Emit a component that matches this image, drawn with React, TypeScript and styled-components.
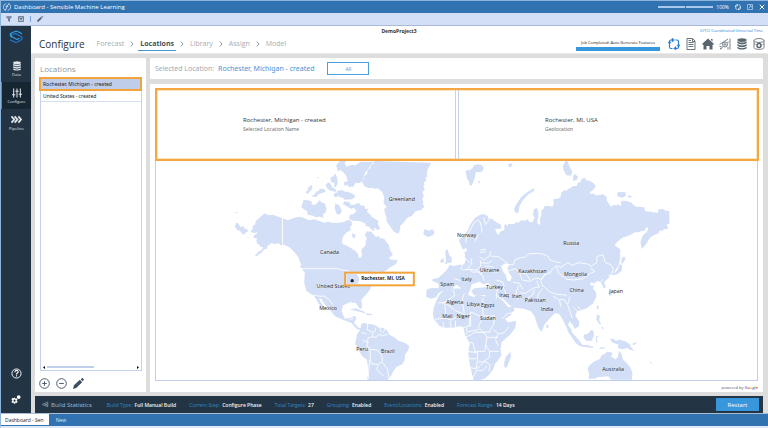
import React from 'react';
import styled, { createGlobalStyle } from 'styled-components';

const GlobalStyle = createGlobalStyle`
  *, *::before, *::after { box-sizing: border-box; }
  html, body, #root { height: 100%; margin: 0; }
  body { font-family: "Open Sans", "Noto Sans", sans-serif; font-size: 5px; color: #333; background: #fff; overflow: hidden; }
  button { font: inherit; color: inherit; border: 0; padding: 0; background: none; cursor: pointer; }
  a { color: inherit; text-decoration: none; }
  h1, h2, p, dl, dd, dt, ul { margin: 0; padding: 0; font-weight: 400; }
  svg { display: block; flex: none; }
`;

const Window = styled.div`
  display: flex; flex-direction: column; height: 100vh;
  border: 1px solid #8db4da; border-right-width: 0; border-bottom: 2px solid #dfe8f5;
  white-space: nowrap;
`;
const TitleBar = styled.header`
  display: flex; align-items: center; gap: 3px; height: 12px; flex: none;
  padding: 0 3px 0 2px; background: #3172b0; color: #fff; font-size: 6px;
`;
const WindowTools = styled.div`
  display: flex; align-items: center; gap: 6px; margin-left: auto; font-size: 5px;
`;
const ZoomTrack = styled.div`
  display: flex; gap: 1px; margin-right: -3px;
  span { width: 27px; height: 2px; background: #a9c8ee; }
`;
const IconButton = styled.button<{ $tone?: string }>`
  display: flex; align-items: center; justify-content: center; color: ${p => p.$tone ?? 'inherit'};
`;
const Toolbar = styled.div`
  display: flex; align-items: center; gap: 6px; height: 13px; flex: none; padding: 0 5px;
  background: #d3dff7; border-bottom: 1px solid #a9b9d8; color: #56657a;
`;
const Divider = styled.span`width: 1px; height: 6px; background: #7ba0dc;`;
const Body = styled.div`display: flex; flex: 1; min-height: 0;`;
const Sidebar = styled.nav`
  display: flex; flex-direction: column; width: 30px; flex: none; background: #233444; color: #fff;
`;
const Logo = styled.div`display: flex; justify-content: center; height: 29px; padding-top: 4px;`;
const NavItem = styled.a<{ $active?: boolean }>`
  display: flex; flex-direction: column; align-items: center; justify-content: center; gap: 1px;
  height: 27px; font-size: 4px; line-height: 5px; color: #dfe5ea;
  background: ${p => (p.$active ? '#172633' : 'transparent')};
  border-left: 1px solid ${p => (p.$active ? '#3d94cf' : 'transparent')};
`;
const SideFooter = styled.div`
  display: flex; flex-direction: column; align-items: center; gap: 16px; margin-top: auto; padding-bottom: 8px;
`;
const Main = styled.main`display: flex; flex-direction: column; flex: 1; min-width: 0; background: #ddd;`;
const PageHeader = styled.div`
  display: grid; grid-template-columns: 1fr auto 1fr; grid-template-rows: 9px 18px; flex: none;
  padding: 0 3px 0 8px; background: #fff; border-bottom: 1px solid #e9e9e9;
`;
const Project = styled.div`grid-column: 2; font-weight: 700; line-height: 10px; font-size: 5px; padding-right: 6px;`;
const Zone = styled.div`grid-column: 3; text-align: right; color: #2585d0; font-size: 4px; line-height: 9px; padding-right: 2px;`;
const HeaderRow = styled.div`grid-column: 1 / -1; display: flex; align-items: center;`;
const PageTitle = styled.h1`font-size: 10px; line-height: 16px; color: #26313a; margin-right: 10px;`;
const Crumbs = styled.nav`display: flex; align-items: center; gap: 3px; font-size: 7px; color: #a3aeb5;`;
const Chevron = styled.span`color: #6d7a83;`;
const Crumb = styled.a<{ $current?: boolean }>`
  line-height: 13px; padding: 0 2px;
  color: ${p => (p.$current ? '#3f5363' : 'inherit')};
  font-weight: ${p => (p.$current ? 700 : 400)};
  border-bottom: 1px solid ${p => (p.$current ? '#4898d0' : 'transparent')};
`;
const HeaderTools = styled.div`display: flex; align-items: center; gap: 5px; margin-left: auto; color: #58656e;`;
const Job = styled.div`
  width: 84px; margin-right: 3px; padding-top: 1px; border-bottom: 4px solid #3796dc; text-align: center;
  font-size: 4px; line-height: 8px; color: #111;
`;
const Content = styled.div`display: flex; gap: 4px; flex: 1; min-height: 0; padding: 4px 5px 4px 4px;`;
const Panel = styled.section`background: #fff; border-radius: 1px;`;
const ListPanel = styled(Panel)`display: flex; flex-direction: column; width: 111px; flex: none; padding: 4px 4px 0;`;
const PanelTitle = styled.h2`font-size: 8px; line-height: 13px; color: #8d989f; padding-left: 1px; margin-bottom: 3px;`;
const ListBox = styled.div`
  display: flex; flex-direction: column; flex: 1; margin-left: 1px; border: 1px solid #c3d0ee; min-height: 0;
`;
const Option = styled.button<{ $selected?: boolean }>`
  text-align: left; font-family: "Noto Sans", sans-serif; font-size: 5px; line-height: 10px; color: #222;
  padding: 0 2px; margin: ${p => (p.$selected ? '-2px -1px 0 -2px' : '0')};
  background: ${p => (p.$selected ? '#bfcdeb' : '#fff')};
  border: ${p => (p.$selected ? '2px solid #f2a33a' : '0')};
  border-bottom: ${p => (p.$selected ? '2px solid #f2a33a' : '1px solid #d5dff5')};
`;
const ScrollRow = styled.div`
  display: flex; align-items: center; justify-content: space-between; margin-top: auto; height: 6px; padding: 0 2px;
`;
const Thumb = styled.span`width: 47px; height: 2px; margin-right: auto; margin-left: 2px; background: #bfd0ea;`;
const ListActions = styled.div`display: flex; align-items: center; gap: 6px; height: 18px; margin-top: 3px; color: #3f4f63;`;
const Right = styled.div`display: flex; flex-direction: column; gap: 5px; flex: 1; min-width: 0;`;
const Selected = styled(Panel)`
  display: flex; align-items: center; gap: 4px; height: 21px; flex: none; padding: 0 5px; font-size: 7px; color: #9aa5ac;
  strong { font-family: "Noto Sans", sans-serif; font-weight: 400; color: #4596d6; }
`;
const AllButton = styled.button`
  width: 42px; height: 13px; margin-left: 9px; border: 1px solid #4aa0dc; color: #4596d6; font-size: 5px;
`;
const MapPanel = styled(Panel)`display: flex; flex-direction: column; flex: 1; min-height: 0; padding: 4px 4px 0 5px;`;
const Cards = styled.div`
  display: grid; grid-template-columns: 1fr 1fr; gap: 2px; height: 73px; flex: none;
  border: 2px solid #f4a742; box-shadow: inset 0 0 0 1px #fde3bd;
`;
const Card = styled.div`
  display: flex; flex-direction: column; justify-content: center; padding: 1px 0 0 86px;
  &:first-child { border-right: 1px solid #c5d0ec; }
  &:last-child { border-left: 1px solid #c5d0ec; }
`;
const CardValue = styled.p`font-size: 6px; line-height: 9px; color: #333;`;
const CardLabel = styled.p`font-size: 5px; line-height: 9px; color: #666;`;
const MapFrame = styled.div`flex: 1; min-height: 0; margin-right: 1px; border: 1px solid #c2cfea; border-top: 0;
  svg { width: 100%; height: 100%; }
`;
const Powered = styled.div`
  text-align: right; font-size: 4px; line-height: 8px; padding: 3px 1px 0 0; color: #555; flex: none;
`;
const Letter = styled.span<{ $c: string }>`color: ${p => p.$c}; font-weight: 600;`;
const Stats = styled.footer`
  display: flex; align-items: center; gap: 15px; height: 17px; flex: none; margin: 0 5px 0 4px; padding: 0 4px 0 7px;
  background: #233444; font-size: 5px;
`;
const StatsTitle = styled.div`display: flex; align-items: center; gap: 2px; font-size: 6px; color: #9ab4ca;
  font-family: "Noto Sans", sans-serif;
`;
const StatList = styled.dl`display: flex; gap: 13px;
  div { display: flex; gap: 2px; }
  dt { color: #3288c6; }
  dd { color: #f0f3f5; font-weight: 600; }
`;
const Restart = styled.button`
  width: 43px; height: 13px; margin-left: auto; background: #3796dc; color: #fff; font-size: 6px;
`;
const TabBar = styled.nav`
  display: flex; gap: 3px; height: 13px; flex: none; background: #3172b0; border-top: 1px solid #a9bdd4; font-size: 5px;
`;
const Tab = styled.a<{ $active?: boolean }>`
  padding: 1px 5px 0 4px; line-height: 10px; height: 11px;
  background: ${p => (p.$active ? '#fff' : 'transparent')};
  color: ${p => (p.$active ? '#222' : '#dbe9f7')};
`;

const Ic = ({ s = 12, children, w = 2 }: { s?: number; w?: number; children: React.ReactNode }) => (
  <svg width={s} height={s} viewBox="0 0 24 24" fill="none" stroke="currentColor" strokeWidth={w} aria-hidden="true">{children}</svg>
);
const Pencil = ({ s }: { s: number }) => (
  <Ic s={s} w={0}><path fill="currentColor" d="M0 24l2-8L15 4l5 5L7 22zM17 3l2-2c1-1 2-1 3 0l1 1c1 1 1 2 0 3l-2 2z" /></Ic>
);
const Gear = ({ s }: { s: number }) => (
  <Ic s={s} w={0}>
    <path fillRule="evenodd" fill="currentColor" d="M7 7l2-1 1 2 2 1 2-1 2 3-2 1v2l2 2-2 3-3-1-1 3H7l-1-3-3 1-2-3 2-2v-2l-2-2 2-3 3 1zM8.500 11a2.500 2.500 0 100 5 2.500 2.500 0 000-5z" />
    <circle cx="18.500" cy="5" r="4.500" fill="currentColor" />
  </Ic>
);
const Discs = ({ s }: { s: number }) => (
  <svg width={s} height={s} viewBox="0 0 24 26" fill="currentColor" aria-hidden="true">
    <ellipse cx="12" cy="4.500" rx="10" ry="4" />
    <path d="M2 7c4 4 16 4 20 0v4c-3 4-17 4-20 0zM2 13c4 4 16 4 20 0v4c-3 4-17 4-20 0zM2 19c4 4 16 4 20 0v3c-3 4-17 4-20 0z" />
  </svg>
);
const Sync = ({ s }: { s: number }) => (
  <Ic s={s} w={2.400}>
    <path d="M9 4H6C4 4 3 5 3 7v10M15 4h3c2 0 3 1 3 3v10M3 15v3c0 2 1 3 3 3h3M21 16v2c0 2-1 3-3 3h-4" />
    <path fill="currentColor" strokeWidth="1" d="M8 0l5 4-5 4zM16 17l-5 4 5 3zM0 10h6l-3-4zM18 14h6l-3 4z" />
  </Ic>
);

const LAND = [
  // North and Central America
  'M795 642l12 6 13-2 25 9 20 8 20-8 15-3 16 5 12 6 15-3 17 5 14 5 12-3 15 4 13-1 16-1 15-7 10 2 3 12-6 6 2 10-14 8-10 13-3 14 5 9 8 2 15 9 12 7 8 9 3 13 7-2 3-8-3-10 3-8 11-11-1-9 4-12-6-8 6-12 14 1 13 16 8-3 5 6 12 2 14 20 4 15 8 14-13 10 10 4 18 1-6 12-20 12-12 10-20 12-16 18-10 26-10 12-16 18 3 16-2 11-7-3-10-15-18-2-20 9-5 18 10 22 17-2 13-7 5 7-8 15 13 13 15 7-2 5-18-8-15-17-25-10-25-10-15-20-10-10-12-15-3-8-8 0 22 36-8-3-14-17-14-24-23-15-7-25 2-30-15-20 5-3-12-25-18-22-20-13-12 1-8-7-9 4-11-4-12 9-2 8-8 2-6 9-12 7-2 4-8-1 12-13 8-3 5-9-8-2-6-8-2 2-5-12 4-5-13-5 3-6 10-7-4-2-5 3-12-5 7-10-1-6 8-6 2-10z',
  'M710 670l6 2 7 11 9-3 3 8 9 2 1 8-6 1-4 6-7-1-6-9-9-4-7-8zM708 638h6v3h-6zM742 712l6 2-3 2z',
  // Canadian arctic islands
  'M912 602l14 1 12 4-3 7 9 3 6-3 10-11 6 6 11 4 4 16-3 11-8 5 2 10-11-3-14 2-5-5-17-2-2-11-10-6-8-8 4-9zM918 580l6-7 2-9 12-8 0 13-9 9-4 6zM935 590l9-4 7-10 7-1 2-7 16 2 2 8-20 6-8 9-10-1zM978 556l9-7 6 4 3 8 14 11-2 7-6-3-10-2-8-6zM993 535l9-5 4-8 6 10 3 17-5 15-7-4 2-9-11-3zM952 536l5-4 1 5zM1002 585l9-6 6 6-2 7-9 2zM1012 575l16-3 9 5 9 0 19 9 2 8-10 6-22 1-5-6-11-2zM1010 498l12-14h20l-7 8 6 9-3 11-8 6-6-6-9 4zM1024 500l14 4 17-8 13 2 15-11h42l-12 10-5 10-12 14-2 14-9 14-8 3-8-2-8 12-14 1-2-6-10 2-2-10 12-4-6-18-6-6zM1030 614l5-8 14 2 6 10 13-3 10-5 5 8 11 1 4 10 8-1-4 10 10 6 4 8 12 8 9 4-2 11 7 12-8 6-10-9 1 12-8-5-11-10-6 0-4-9-14-6-15-2-9 0-10-7 4-11 10-2 9-8-7-10-10 2zM1007 612l12 6 8 17-6 11-10-3-5-15z',
  'M1132 796l14-4 8 10 3 14-18 0zM1058 702l10 4-3 12-7-6z',
  // Caribbean
  'M1050 930l20-3 28 12-2 3-22-6zM1100 942l16 2 3 4-18-1zM795 938l2 2h-3z',
  // Greenland
  'M1125 485l-3 8-8 5-2 8-8 7-1 10-9 9-4 6-3 8 7 14 12 6 12 0 8 2 9-1 13 11 6 16-2 20 5 2 4 8-7 6 2 10 5 14 0 12 10 14 11 16 8 5 8 2 4-15 0-8 9-9 14-17 12-4 11-14 16-4 11-10-5-8 2-8-5-6 6-9-4-13 7-8-5-9 4-4-2-7 8-7-4-8 8-4-4-6 4-16 5-9 5-10z',
  'M1273 692l5-2 9 4 12-4 6 8-4 10-17 5-12-8zM1398 514l9-3 3 3 12-12 5 4 3 9-3 14-4 16-7 15-6-4-2-11-6-8zM1422 498l14-3 12 3 5 8-4 9-9 4-14-3zM1436 544l6 2-4 9zM1525 494l12-2 2 8-10 4-2-4zM1546 639l-2-12 8-14 13-20 19-15 19-11 2 7-16 9-17 17-12 20-4 22z',
  // British Isles
  'M1337 755l7-5 5 16 8 10 0 13-21 5 4-11-2-16zM1322 784l10-9 1 12-8 5z',
  // Scandinavia
  'M1378 722l12-11 12-13 9-20 14-21 14-9 13-4 14 7-3 13 5 24 4 26-7 20-20 5-8-12 3-13 8-10-12 1-9 16-3 16 1 13-6 9-8 10-7-10-3-12-12 3z',
  // Eurasia
  'M1462 657l14 1 14 10 14 8 1 12-18 0 4 12 6 7 5-10 13-6-1-12 5-6 4 8 4-7 16 1 8-7 6 2 9-7 9 1 8-4 8 9 8 0 6-14-5-10 3-14 8-6 5 10 1 17-4 18 6 7 3-3-1-15 4-10 1-16 6-4 3-8 8-2 16 3 4-10-2-12 13-2 9-4 2-13 10-9 6 2 6-6 6-1 6-6 13-1 3-10 9-2 2-9 10-4 4 8 3 0 9 3 9 4 8 10-8 12-12 8 6 4 6-2 7 6 9 0 14-3 10 7 1 12 5 6 4 8 5 5 4-6 11 1 5-3 7 5 2-3 0-13 17 1 14 5 7 8 9 5 7-1 15 2 2 9 2 3 18 1 6 3 5-1 9 2 0-10 2-1 12-1 9 5 10 1 1 38-8 2 4 13-10 1-8 5-8 0-4 9-6 1-16 9-7 9-5 10-9 11-6 6-4-22 6-18 12-10 6-12-6-3-6 10-8 1-10 4-10 0-15 8-25 9-14 12-8 10 17 12 0 24-3 20-14 24-10 6-8 12-13 12 5 16-6 4-7-16-11-8-12 9-8-5-4 8 14 4-5 6 10 14 0 14-9 18-18 14-18 7-12 3-6 13 13 18-2 14-12 8-8-15-9-8-3 11 9 13 6 20-9-4-7-14-10-20-8-16-8-12-12-3-15 15-16 18-10 24-9-12-8-22-3-12-12-16-18-7-18-2-14-2-15-9-18-18-5 0 7 10 13 15 14-2 5 11-13 17-28 17-19 6-10-18-13-28-6-18 4-13-3-8-20 2-14-2-8-12 10-8 30-3 24 1-13-14-15 4-10-8-24 8-5 17-7 14-11-6-12-16-11-8-12 9 15 11 14 14-5 3-5 10-5-1 0-10-14-14-14-8-14 4-14 8-7 12-15 4-15-5 1-22 15-5 22 1-1-14-19-9 1-5 17-3 14-13 12-12 9-15 10 4 14-3 19-2 6-15-4-8 2-14 15-5 7-12z',
  'M1395 758l8-4 2 12-8 5z',
  // Africa
  'M1322 883l13-10 25-5 28-1 5 14 20 8 11 5 8-10 16 6 24 4 15 5 8 16 7 16 10 22 13 16 25-4-3 22-17 21-24 21-3 22 3 16-10 16-10 11-5 16-13 17-14 12-15 3-12 3-6-6-8-35-5-24-2-22 5-25-10-18-6-12-1-14-12-9-22 5-26 0-18-7-12-15-4-18 3-22 10-25z',
  'M1530 1060l3-3 1 15-7 20-5 12-7 1-1-15 5-18z',
  // South America
  'M1085 975l7-5 9 3 12 1 14 4 13 8 10-1 12 7 8 14 14 8 13 10 22 8 10 8-3 13-9 12-2 18-7 12-17 8-9 12-7 14-12 14-60 0 3-22-1-22-3-18-15-12-9-16-11-20 3-14 3-16 9-10z',
  // Asia-Pacific islands
  'M1866 780l4-8 8 2-2 9-9 12-2-8zM1860 795l8 2-2 18-12 10-18 3-2-5 14-4 6-8zM1828 875l7 0 2 9-6 8-4-10zM1642 973l6 8-3 7-5-4zM1794 918l4 1-2 13-5-6zM1792 945l9 4-2 16 7 9-6 1-9-14zM1805 980l8 6-4 4zM1702 992l11 3 14 14 13 16 9 11-5 6-15-10-12-18zM1740 1036l22 1 20 5-2 4-38-5zM1753 1006l12-3 11-12 7 6 0 12-7 16-16-1-8-10zM1788 1012l13-3-10 7 4 14-4 0zM1800 1045l20-2-9 5-11 1zM1832 1018l10 0 6 6 14-3 18 6 13 9 0 6 12 12-12-2-10-6-16 4-12-4 2-10-20-7zM1900 1032l14-4-8 8-6 1zM1948 1086l10 5-3 2zM1997 1075h4v2h-4z',
  // Australia
  'M1768 1100l14-12 19-9 6-12 10-4 6-6 10 1 6 4-4 10 14 8 6-8 4-18 7 10 4 16 12 12 10 12 7 16-2 21-62 0-9-10-16 1-17 2-6 4h-20l2-14-5-16z',
  // Arctic Russia
  'M1690 500l8-15 6 0 6 16 8 16-3 12-14-1-8-14zM1722 528l4-4 10 8-4 9-12 4zM1853 580l10-3 15 2 1 10-10 6-16-4zM1884 588l10 1 4 4-10 2zM1864 611l8 0 2 4-9 1zM2004 640l3 1-2 2zM1868 690l5 0 2 9-4 5z',
].join('');

const BORDERS = [
  'M849 655v84l20 5 18 18 12 18M900 808h115l12 4 18 2 20 14 14 16 20-6 16-8 8-12h18M940 887l22 4 12-1 16 12 10 14M1030 946l8-8h10M1050 962l12-5',
  'M1105 972l-2 20 18 6-3 14-12 4-2 14-14-8M1087 1000l14 4M1129 985l-4 14M1142 985l2 14M1158 984l-8 18M1118 1012l12 2 8-10 10 6 18-6M1106 1028l-4 12 10 8M1112 1050l22 2 12 14 3 18-12 12-22-3-3-18zM1110 1082l-4 58M1148 1088l16 22 4 26M1136 1098l-4 12 20 20',
  'M1398 730l4-18 10-20 12-22 12-8 6 8M1442 668l5 20-1 12M1452 654l6 22 12-16',
  'M1442 752l18-2M1440 760l20-3M1440 772l14 10 16-12 4-14M1415 776l2 18-14 14M1402 780l10 12M1380 785l10 8-6 18M1388 812l22-2 20 2 14-12-2-18M1410 808l8 10 24 0M1430 810l14 14 8-10M1442 790l24 2 12-8M1455 800l24 2 6 16 12 0M1440 822l10 8 4 14M1364 838l20 6',
  'M1474 770l22 2 18 12 14 12 14 0 4-14 14-6 16-2 10-10 24-2 20 2 14 6 8 12 18 6 14 2M1526 814l22-6 12 12 20 4 12 18M1560 820l8 22 22 4 20-10 16 4 12-14 14-12M1670 800l-14 12-2 8-20 6-10 20 6 14 22 18 16 6 20 2 14 2M1670 800l14 4 20-14 14 8 18-8 28 4 12 8M1670 804l8 18 24 18 20 2 28-4 20-14 16-8-12-8M1776 800l16-10 0-18 18-6 8 24 16 6 8 14-8 18-8 0M1810 840l-10 14',
  'M1490 842l20 6 4 12M1510 862l10 22 12 4M1494 868l-4 20 20 14 14 10M1540 848l20 4 10 18M1558 858l-8 22 4 20M1560 880l18 2 24-16 20-4M1578 900l20-12 8-18M1600 908l14-6 2-18 14-16M1618 862l-6-18M1660 890l20 12 14-2 8 14M1680 902l4 20M1712 892l-8 24 8 22 6 18M1722 924l14 14 8 14M1734 920l10 12M1508 958l14-14 24-6 10-8M1494 888l-4 10',
  'M1360 870l6 18-38 26M1316 910l20 0 32 24 36 16M1336 914l4 42-34 4M1394 883l-6 18 6 40M1414 938l34 16M1450 896l0 54 36 0M1412 952l-4 28M1336 956l20 6 20-12M1412 938l2 42-34 6M1450 956l-14 26 14 16 24 0M1486 950l-4 26-14 22M1480 990l18 14 16-4 14-18M1368 964l0 30M1352 966l4 28M1330 968l6 26M1304 962l14 14-14 8M1380 986l-4 8M1400 984l4 14-14 14M1404 998l34-8M1390 1016l22-8 14-10 28 2 8 12M1396 1030l24 0 6 24M1462 1012l-4 28-2 16-32 0M1400 1056l34 4 0 18-32 0M1462 1014l34 0M1496 1004l-8 16 8 20M1458 1036l12 20 28 0M1470 1056l0 18-20 14-14 0M1402 1104l28 4 4-28M1430 1108l12-8 14-14 16 10-4 20M1418 1138l14-26 18 2 12-14',
].join('');

const LABELS: [string, number, number][] = [
  ['Greenland', 1207, 602], ['Canada', 990, 762], ['United States', 1001, 863], ['Mexico', 986, 930], ['Peru', 1088, 1052],
  ['Brazil', 1165, 1058], ['Norway', 1401, 711], ['Russia', 1715, 734], ['Ukraine', 1470, 815], ['Italy', 1401, 844],
  ['Spain', 1343, 859], ['Turkey', 1485, 866], ['Kazakhstan', 1599, 820], ['Mongolia', 1728, 827], ['China', 1731, 876],
  ['Japan', 1850, 879], ['Iraq', 1514, 892], ['Iran', 1552, 895], ['Pakistan', 1607, 905], ['India', 1643, 933],
  ['Algeria', 1366, 912], ['Libya', 1421, 917], ['Egypt', 1465, 920], ['Mali', 1344, 955], ['Niger', 1391, 955],
  ['Sudan', 1465, 960], ['Australia', 1841, 1114],
];

const WorldMap = () => (
  <svg viewBox="468 485 1806 657" preserveAspectRatio="xMidYMid slice" role="img" aria-label="Map of locations">
    <path d={LAND} fill="#d3dff7" strokeLinejoin="round" />
    <path d="M1505 800l12-8 14 4-8 10 6 16 8 10-4 14-10-2-4-18-8-8z" fill="#fff" />
    <path d={BORDERS} fill="none" stroke="#fff" strokeOpacity=".85" strokeWidth="3" strokeLinejoin="round" />
    <g fontSize="16" fill="#222" stroke="#fff" strokeOpacity=".45" strokeWidth="2" paintOrder="stroke" textAnchor="middle">
      {LABELS.map(([name, x, y]) => <text key={name} x={x} y={y + 2}>{name}</text>)}
    </g>
    <rect x="1037" y="820" width="206" height="38" fill="#fff" stroke="#f2a33a" strokeWidth="6" />
    <path d="M1041 824h30l8 12-2 12-4 6h-32z" fill="#d3dff7" />
    <circle cx="1058" cy="844" r="5" fill="#222" />
    <text x="1085" y="843" fontSize="14" fontWeight="700" fill="#222">Rochester, MI, USA</text>
  </svg>
);

const stats = [
  ['Build Type:', 'Full Manual Build'], ['Current Step:', 'Configure Phase'], ['Total Targets:', '27'],
  ['Grouping:', 'Enabled'], ['Event/Locations:', 'Enabled'], ['Forecast Range:', '14 Days'],
];
const crumbs = ['Forecast', 'Locations', 'Library', 'Assign', 'Model'];

export default function App() {
  return (
    <Window>
      <GlobalStyle />
      <TitleBar>
        <Ic s={8}><path d="M10 2C4 3 1 8 1 13c0 4 3 8 8 9M14 22c5-1 9-5 9-11 0-4-3-8-7-9M6 22C12 20 10 4 19 2M8 10h8" /></Ic>
        <span>Dashboard - Sensible Machine Learning</span>
        <WindowTools>
          <ZoomTrack><span /><span /></ZoomTrack>
          <span>100%</span>
          <IconButton aria-label="Refresh"><Sync s={6} /></IconButton>
          <IconButton aria-label="Restore"><Ic s={6}><path d="M2 2h20v20H2zM7 17l9-9M10 7h7v7" /></Ic></IconButton>
          <IconButton aria-label="Close"><Ic s={6} w={4}><path d="M3 3l18 18M21 3L3 21" /></Ic></IconButton>
        </WindowTools>
      </TitleBar>
      <Toolbar>
        <IconButton aria-label="Filter"><Ic s={6} w={3}><path d="M2 3h20l-8 9v10l-4-3v-7z" fill="#8a98ad" /></Ic></IconButton>
        <IconButton aria-label="Clear filter"><Ic s={6} w={3}><path d="M2 2h20v20H2zM2 9h20M7 5l10 14M17 5L7 19" /></Ic></IconButton>
        <Divider />
        <IconButton aria-label="Edit"><Pencil s={6} /></IconButton>
      </Toolbar>
      <Body>
        <Sidebar aria-label="Phases">
          <Logo>
            <svg width="14" height="14" viewBox="0 0 28 28" fill="none" strokeWidth="2.600" strokeLinejoin="round" strokeLinecap="round" aria-hidden="true">
              <path d="M5 14L3 11c-1-2 0-4 2-5l7-3c2-1 3-1 5 0l8 4" stroke="#2ba3e8" />
              <path d="M8 9l5-2 11 6c3 2 3 5 0 7l-7 4c-2 1-4 1-6 0l-8-4" stroke="#1d78d4" />
              <path d="M4 8c-1 3 0 5 3 6l9 5 4-2" stroke="#2ba3e8" />
            </svg>
          </Logo>
          <NavItem href="#data"><Discs s={10} />Data</NavItem>
          <NavItem href="#configure" $active>
            <Ic s={10} w={2.500}><path d="M4 1v22M12 1v22M20 1v22M0 16h8M8 8h8M16 15h8" /></Ic>Configure
          </NavItem>
          <NavItem href="#pipeline">
            <Ic s={11} w={4}><path d="M1 5l6 7-6 7M8 5l6 7-6 7M16 5l6 7-6 7" /></Ic>Pipeline
          </NavItem>
          <SideFooter>
            <IconButton aria-label="Help"><Ic s={11}><circle cx="12" cy="12" r="10" /><path d="M8.500 9c0-5 7-5 7-1 0 3-3.500 3-3.500 6M12 16v2.500" strokeWidth="2.500" /></Ic></IconButton>
            <IconButton aria-label="Settings"><Gear s={10} /></IconButton>
          </SideFooter>
        </Sidebar>
        <Main>
          <PageHeader>
            <Project>DemoProject3</Project>
            <Zone>(UTC) Coordinated Universal Time</Zone>
            <HeaderRow>
              <PageTitle>Configure</PageTitle>
              <Crumbs aria-label="Steps">
                {crumbs.map((c, i) => (
                  <React.Fragment key={c}>
                    {i > 0 && <Chevron><Ic s={6} w={3}><path d="M7 2l9 10-9 10" /></Ic></Chevron>}
                    <Crumb href={`#${c}`} $current={c === 'Locations'}>{c}</Crumb>
                  </React.Fragment>
                ))}
              </Crumbs>
              <HeaderTools>
                <Job>Job Completed: Auto Generate Features</Job>
                <IconButton aria-label="Sync" $tone="#2b7fd6"><Sync s={12} /></IconButton>
                <IconButton aria-label="Report"><Ic s={12} w={1.800}><path d="M4 1h11l5 5v17H4zM15 1v6h5M7 9h10M7 13h10M7 17h10M7 5h5" /></Ic></IconButton>
                <IconButton aria-label="Home"><Ic s={12} w={0}><path fill="currentColor" d="M12 1l12 11-2 2-1-1v10h-6v-7H9v7H3V13l-1 1-2-2zM18 2h3v5l-3-3z" /></Ic></IconButton>
                <IconButton aria-label="Analysis"><Ic s={12} w={1.600}><path d="M1 13L18 2M22 1v22M18 7v3M18 18v5M1 17h4M2 21l3-1" /><circle cx="12" cy="13" r="5" /><path d="M10 15v-3M12 15v-5M14 15v-3M8 17l-5 6" /></Ic></IconButton>
                <IconButton aria-label="Database"><Discs s={12} /></IconButton>
                <IconButton aria-label="Data settings"><Ic s={12} w={1.600}><ellipse cx="12" cy="5" rx="10" ry="4" /><path d="M2 5v14c0 5 20 5 20 0V5M2 11l3 2M22 11l-3 2" /><circle cx="12" cy="15" r="4" strokeWidth="3" /></Ic></IconButton>
              </HeaderTools>
            </HeaderRow>
          </PageHeader>
          <Content>
            <ListPanel>
              <PanelTitle>Locations</PanelTitle>
              <ListBox>
                <Option $selected aria-pressed="true">Rochester, Michigan - created</Option>
                <Option>United States - created</Option>
                <ScrollRow>
                  <svg width="2" height="3" viewBox="0 0 2 3"><path d="M2 0v3L0 1.500z" /></svg>
                  <Thumb />
                  <svg width="2" height="3" viewBox="0 0 2 3"><path d="M0 0v3l2-1.500z" /></svg>
                </ScrollRow>
              </ListBox>
              <ListActions>
                <IconButton aria-label="Add"><Ic s={11}><circle cx="12" cy="12" r="10.500" /><path d="M7 12h10M12 7v10" /></Ic></IconButton>
                <IconButton aria-label="Remove"><Ic s={11}><circle cx="12" cy="12" r="10.500" /><path d="M7 12h10" /></Ic></IconButton>
                <IconButton aria-label="Edit location"><Pencil s={11} /></IconButton>
              </ListActions>
            </ListPanel>
            <Right>
              <Selected>
                <span>Selected Location:</span><strong>Rochester, Michigan - created</strong>
                <AllButton>All</AllButton>
              </Selected>
              <MapPanel>
                <Cards>
                  <Card><CardValue>Rochester, Michigan - created</CardValue><CardLabel>Selected Location Name</CardLabel></Card>
                  <Card><CardValue>Rochester, MI, USA</CardValue><CardLabel>Geolocation</CardLabel></Card>
                </Cards>
                <MapFrame><WorldMap /></MapFrame>
                <Powered>
                  powered by <Letter $c="#4285f4">G</Letter><Letter $c="#ea4335">o</Letter><Letter $c="#fbbc05">o</Letter><Letter $c="#4285f4">g</Letter><Letter $c="#34a853">l</Letter><Letter $c="#ea4335">e</Letter>
                </Powered>
              </MapPanel>
            </Right>
          </Content>
          <Stats>
            <StatsTitle>
              <Ic s={7}><path d="M1 12L20 3v17zM8 9l12 7M8 15l12-6" /></Ic>Build Statistics
            </StatsTitle>
            <StatList>{stats.map(([k, v]) => <div key={k}><dt>{k}</dt><dd>{v}</dd></div>)}</StatList>
            <Restart>Restart</Restart>
          </Stats>
        </Main>
      </Body>
      <TabBar aria-label="Pages">
        <Tab href="#dashboard" $active>Dashboard - Sen</Tab>
        <Tab href="#new">New</Tab>
      </TabBar>
    </Window>
  );
}
